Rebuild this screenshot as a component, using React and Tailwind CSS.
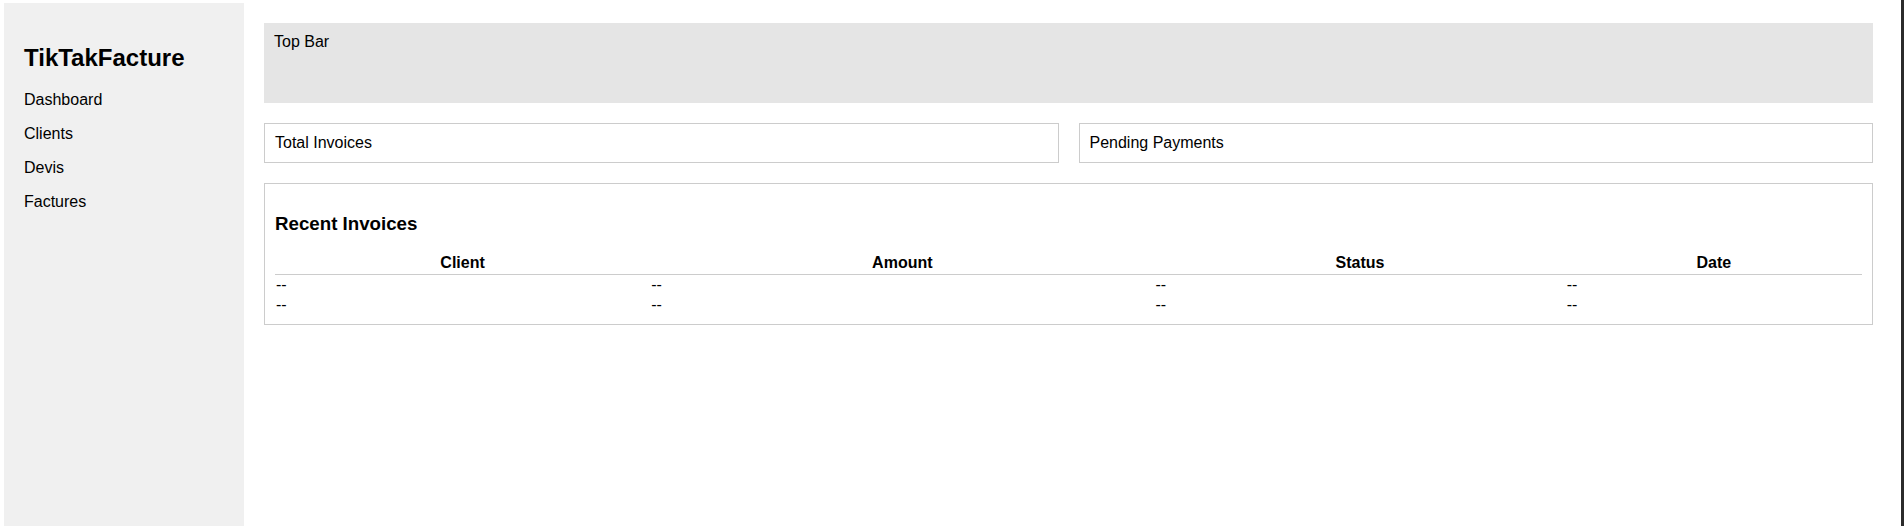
const rows = [
  { client: "--", amount: "--", status: "--", date: "--" },
  { client: "--", amount: "--", status: "--", date: "--" },
];

function Sidebar() {
  return (
    <aside className="w-[240px] shrink-0 bg-[#f0f0f0] px-[20px] pt-[21px]">
      <h2 className="my-[19.92px] text-[24px] leading-[27.6px] font-bold">TikTakFacture</h2>
      <ul className="flex flex-col gap-[15.6px]">
        <li className="leading-[18.4px]">Dashboard</li>
        <li className="leading-[18.4px]">Clients</li>
        <li className="leading-[18.4px]">Devis</li>
        <li className="leading-[18.4px]">Factures</li>
      </ul>
    </aside>
  );
}

function Card({ title }) {
  return (
    <div className="border border-[#cccccc] p-[10px] leading-[18.4px]">{title}</div>
  );
}

export default function App() {
  return (
    <div
      className="flex h-screen bg-white pt-[3px] pl-[4px] border-r-[3px] border-[#2b2b2b] text-[16px] text-black"
      style={{ fontFamily: '"Liberation Sans", Arial, sans-serif' }}
    >
      <Sidebar />
      <main className="flex-1 min-w-0 pt-[20px] pl-[20px] pr-[28px]">
        <div className="h-[80px] bg-[#e5e5e5] px-[10px] pt-[10px] leading-[18.4px]">Top Bar</div>
        <div className="mt-[20px] grid grid-cols-2 gap-[20px]">
          <Card title="Total Invoices" />
          <Card title="Pending Payments" />
        </div>
        <section className="mt-[20px] border border-[#cccccc] px-[10px] pt-[10px] pb-[8px]">
          <h3 className="my-[18.72px] text-[18.72px] leading-[21.5px] font-bold">Recent Invoices</h3>
          <table className="w-full border-collapse leading-[18.4px]">
            <thead>
              <tr className="border-b border-[#cccccc]">
                <th className="p-[1px] text-center font-bold">Client</th>
                <th className="p-[1px] text-center font-bold">Amount</th>
                <th className="p-[1px] text-center font-bold">Status</th>
                <th className="p-[1px] text-center font-bold">Date</th>
              </tr>
            </thead>
            <tbody>
              {rows.map((r, i) => (
                <tr key={i}>
                  <td className="p-[1px]">{r.client}</td>
                  <td className="p-[1px]">{r.amount}</td>
                  <td className="p-[1px]">{r.status}</td>
                  <td className="p-[1px]">{r.date}</td>
                </tr>
              ))}
            </tbody>
          </table>
        </section>
      </main>
    </div>
  );
}
